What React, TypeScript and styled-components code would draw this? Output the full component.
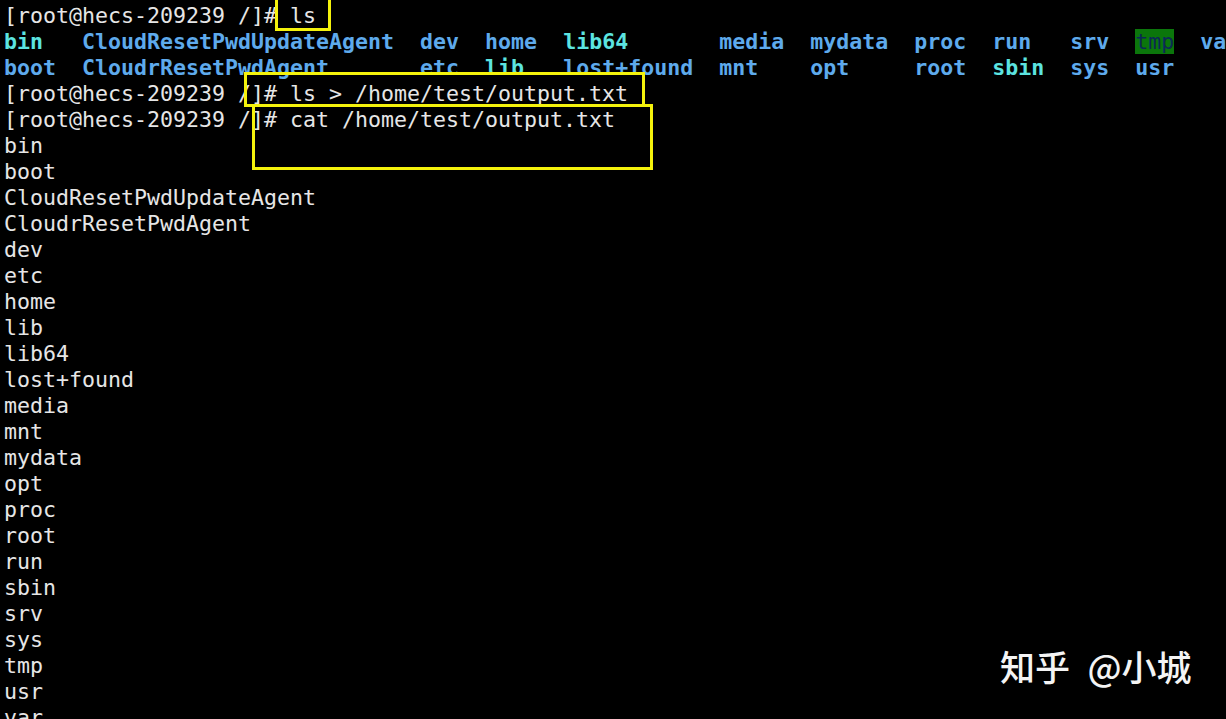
import React from "react";
import styled, { createGlobalStyle } from "styled-components";

const GlobalStyle = createGlobalStyle`
  html, body { margin: 0; padding: 0; background: #000; }
  #root { width: 1226px; height: 719px; overflow: hidden; }
`;

const Screen = styled.div`
  position: relative;
  width: 1226px;
  height: 719px;
  overflow: hidden;
  background: #000;
`;

const Terminal = styled.div`
  display: flex;
  flex-direction: column;
  padding: 3px 0 0 4px;
  font-family: "DejaVu Sans Mono", "Liberation Mono", monospace;
  font-size: 21.6px;
  line-height: 26px;
  color: #e6e6e6;
`;

const Line = styled.div`
  white-space: pre;
  height: 26px;
`;

type Kind = "dir" | "link" | "sticky";

const Entry = styled.span<{ $kind: Kind }>`
  font-weight: ${(p) => (p.$kind === "sticky" ? 400 : 700)};
  color: ${(p) =>
    p.$kind === "dir" ? "#5eaaec" : p.$kind === "link" ? "#5ce4e0" : "#0c2a55"};
  background: ${(p) => (p.$kind === "sticky" ? "#0b760b" : "transparent")};
`;

const Highlight = styled.div<{ $x: number; $y: number; $w: number; $h: number }>`
  position: absolute;
  left: ${(p) => p.$x}px;
  top: ${(p) => p.$y}px;
  width: ${(p) => p.$w}px;
  height: ${(p) => p.$h}px;
  border: 3px solid #f4f20c;
  box-sizing: border-box;
`;

const Watermark = styled.div`
  position: absolute;
  left: 1000px;
  top: 644px;
  font-family: "Noto Sans CJK SC", "Noto Sans", sans-serif;
  font-size: 35px;
  font-weight: 500;
  line-height: 44px;
  color: #f4f4f4;
  white-space: pre;
`;

const PROMPT = "[root@hecs-209239 /]# ";

const row1: [string, Kind, number][] = [
  ["bin", "link", 6],
  ["CloudResetPwdUpdateAgent", "dir", 26],
  ["dev", "dir", 5],
  ["home", "dir", 6],
  ["lib64", "link", 12],
  ["media", "dir", 7],
  ["mydata", "dir", 8],
  ["proc", "dir", 6],
  ["run", "dir", 6],
  ["srv", "dir", 5],
  ["tmp", "sticky", 5],
  ["var", "dir", 3],
];

const row2: [string, Kind, number][] = [
  ["boot", "dir", 6],
  ["CloudrResetPwdAgent", "dir", 26],
  ["etc", "dir", 5],
  ["lib", "link", 6],
  ["lost+found", "dir", 12],
  ["mnt", "dir", 7],
  ["opt", "dir", 8],
  ["root", "dir", 6],
  ["sbin", "link", 6],
  ["sys", "dir", 5],
  ["usr", "dir", 5],
];

const files = [
  "bin", "boot", "CloudResetPwdUpdateAgent", "CloudrResetPwdAgent", "dev", "etc",
  "home", "lib", "lib64", "lost+found", "media", "mnt", "mydata", "opt", "proc",
  "root", "run", "sbin", "srv", "sys", "tmp", "usr", "var",
];

const LsRow: React.FC<{ items: [string, Kind, number][] }> = ({ items }) => (
  <Line>
    {items.map(([name, kind, width]) => (
      <React.Fragment key={name}>
        <Entry $kind={kind}>{name}</Entry>
        {" ".repeat(Math.max(0, width - name.length))}
      </React.Fragment>
    ))}
  </Line>
);

export default function App() {
  return (
    <>
      <GlobalStyle />
      <Screen>
        <Terminal>
          <Line>{PROMPT}ls</Line>
          <LsRow items={row1} />
          <LsRow items={row2} />
          <Line>{PROMPT}ls &gt; /home/test/output.txt</Line>
          <Line>{PROMPT}cat /home/test/output.txt</Line>
          {files.map((f) => (
            <Line key={f}>{f}</Line>
          ))}
        </Terminal>
        <Highlight $x={275} $y={-3} $w={56} $h={34} />
        <Highlight $x={244} $y={72} $w={401} $h={35} />
        <Highlight $x={252} $y={104} $w={401} $h={66} />
        <Watermark>知乎{"\u2002"}@小城</Watermark>
      </Screen>
    </>
  );
}
